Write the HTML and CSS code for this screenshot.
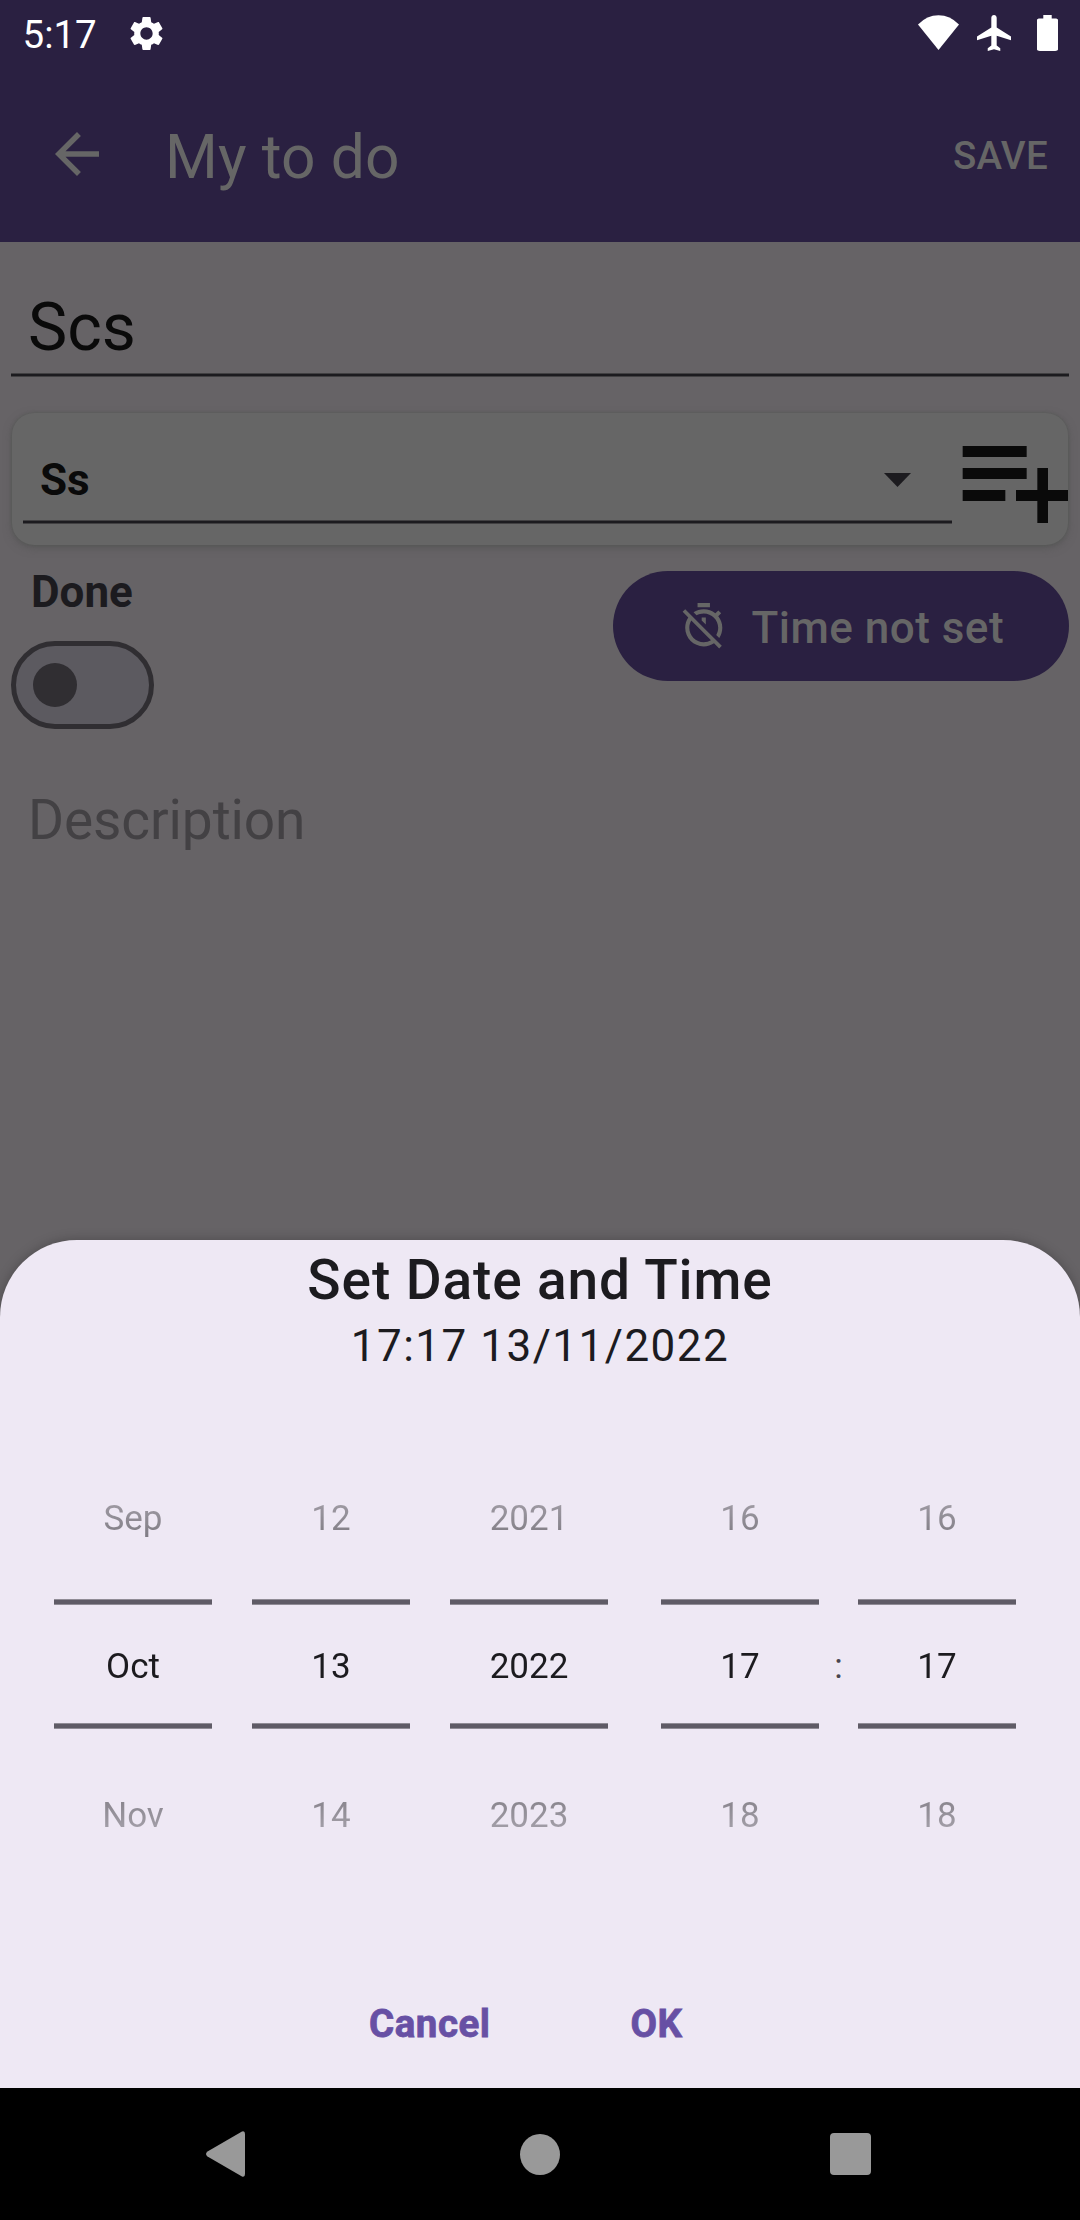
FILE: index.html
```html
<!DOCTYPE html>
<html lang="en">
<head>
<meta charset="utf-8">
<title>My to do</title>
<link rel="stylesheet" href="styles.css">
</head>
<body>
<div class="phone">
  <div class="status">
    <span class="clock">5:17</span>
    <svg class="gear" viewBox="0 0 24 24"><path fill="#fff" d="M19.14 12.94c.04-.3.06-.61.06-.94 0-.32-.02-.64-.07-.94l2.03-1.58c.18-.14.23-.41.12-.61l-1.92-3.32c-.12-.22-.37-.29-.59-.22l-2.39.96c-.5-.38-1.03-.7-1.62-.94l-.36-2.54c-.04-.24-.24-.41-.48-.41h-3.84c-.24 0-.43.17-.47.41l-.36 2.54c-.59.24-1.13.57-1.62.94l-2.39-.96c-.22-.08-.47 0-.59.22L2.74 8.87c-.12.21-.08.47.12.61l2.03 1.58c-.05.3-.09.63-.09.94s.02.64.07.94l-2.03 1.58c-.18.14-.23.41-.12.61l1.92 3.32c.12.22.37.29.59.22l2.39-.96c.5.38 1.03.7 1.62.94l.36 2.54c.05.24.24.41.48.41h3.84c.24 0 .44-.17.47-.41l.36-2.54c.59-.24 1.13-.56 1.62-.94l2.39.96c.22.08.47 0 .59-.22l1.92-3.32c.12-.22.07-.47-.12-.61l-2.01-1.58zM12 15.6c-1.98 0-3.6-1.62-3.6-3.6s1.62-3.6 3.6-3.6 3.6 1.62 3.6 3.6-1.62 3.6-3.6 3.6z"/></svg>
    <div class="indicators">
      <svg width="41" height="36" viewBox="0 0 41 36"><path fill="#fff" d="M20.500 35L0 9.500Q9 .3 20.500.3T41 9.500z"/></svg>
      <svg width="34" height="36" viewBox="2 2 19 20" preserveAspectRatio="none"><path fill="#fff" d="M21 16v-2l-8-5V3.500c0-.83-.67-1.500-1.500-1.500S10 2.670 10 3.500V9l-8 5v2l8-2.500V19l-2 1.500V22l3.500-1 3.500 1v-1.500L13 19v-5.500l8 2.500z"/></svg>
      <svg width="21" height="36" viewBox="7 2 10 20" preserveAspectRatio="none"><path fill="#fff" d="M15.670 4H14V2h-4v2H8.330C7.600 4 7 4.300 7 4.800v16.400c0 .5.600.8 1.330.8h7.330c.74 0 1.340-.3 1.340-.8V4.800c0-.5-.6-.8-1.330-.8z"/></svg>
    </div>
  </div>

  <header class="toolbar">
    <svg class="back" viewBox="0 0 24 24"><path fill="#666" d="M20 11H7.830l5.590-5.590L12 4l-8 8 8 8 1.410-1.410L7.830 13H20v-2z"/></svg>
    <h1 class="title">My to do</h1>
    <span class="save">SAVE</span>
  </header>

  <main class="form">
    <div class="name-field">Scs</div>
    <div class="card">
      <div class="select"><span>Ss</span>
        <svg class="caret" viewBox="0 0 27 14"><path fill="#1c1b1f" d="M0 0h27L13.500 14z"/></svg>
      </div>
      <svg class="add" viewBox="0 0 24 24" preserveAspectRatio="none"><path fill="#0a0a0a" d="M14 10H2v2h12zM14 6H2v2h12zM18 14v-4h-2v4h-4v2h4v4h2v-4h4v-2zM2 16h8v-2H2z"/></svg>
    </div>
    <div class="row">
      <div class="done">
        <span class="done-label">Done</span>
        <div class="switch"><div class="thumb"></div></div>
      </div>
      <div class="time-button">
        <svg class="timer" viewBox="0 0 24 24"><path fill="#666" d="M19.040 4.550l-1.420 1.420C16.070 4.740 14.120 4 12 4c-1.830 0-3.530.55-4.950 1.480l1.460 1.460C9.530 6.350 10.730 6 12 6c3.870 0 7 3.130 7 7 0 1.270-.35 2.470-.94 3.490l1.450 1.450C20.450 16.530 21 14.830 21 13c0-2.120-.74-4.070-1.970-5.610l1.420-1.420-1.410-1.420zM15 1H9v2h6V1zm-4 8.440l2 2V8h-2v1.440zM3.020 4L1.750 5.270 4.500 8.030C3.550 9.450 3 11.160 3 13c0 4.970 4.020 9 9 9 1.840 0 3.550-.55 4.980-1.500l2.500 2.500 1.270-1.270-7.710-7.710L3.020 4zM12 20c-3.870 0-7-3.130-7-7 0-1.280.35-2.480.95-3.520l9.560 9.560c-1.030.61-2.230.96-3.510.96z"/></svg>
        <span>Time not set</span>
      </div>
    </div>
    <div class="description">Description</div>
  </main>

  <section class="sheet">
    <h2 class="sheet-title">Set Date and Time</h2>
    <div class="sheet-value">17:17 13/11/2022</div>
    <div class="pickers">
      <div class="picker"><div class="wheel"><span>Sep</span><span>Oct</span><span>Nov</span></div></div>
      <div class="picker"><div class="wheel"><span>12</span><span>13</span><span>14</span></div></div>
      <div class="picker"><div class="wheel"><span>2021</span><span>2022</span><span>2023</span></div></div>
      <div class="picker hour"><div class="wheel"><span>16</span><span>17</span><span>18</span></div></div>
      <div class="colon">:</div>
      <div class="picker"><div class="wheel"><span>16</span><span>17</span><span>18</span></div></div>
    </div>
    <div class="actions"><span>Cancel</span><span>OK</span></div>
  </section>

  <nav class="nav">
    <svg width="39" height="46" viewBox="0 0 39 46"><path fill="#999" d="M36 .5Q39-.5 39 3v40q0 3.500-3 2.500L1.500 25.500q-3-2.500 0-5z"/></svg>
    <svg class="home" width="40" height="41" viewBox="0 0 40 41"><ellipse cx="20" cy="20.500" rx="20" ry="20.500" fill="#999"/></svg>
    <svg width="41" height="42" viewBox="0 0 41 42"><rect width="41" height="42" rx="4" fill="#999"/></svg>
  </nav>
</div>
</body>
</html>
```
FILE: styles.css
```css
* { box-sizing: border-box; }
body { margin: 0; font-family: Roboto, sans-serif; }
svg { display: block; flex: none; }
h1, h2 { margin: 0; }

.phone {
  width: 1080px;
  height: 2220px;
  display: flex;
  flex-direction: column;
  background: #666366;
  overflow: hidden;
}

.status {
  height: 66px;
  flex: none;
  display: flex;
  padding: 0 22px 0 22.500px;
  background: #2a2041;
  color: #fff;
}
.clock { width: 103.500px; font-size: 38.500px; line-height: 69px; }
.gear { width: 41px; height: 41px; margin-top: 13px; }
.indicators { display: flex; gap: 0 18px; margin: 15px 0 0 auto; }
.indicators svg:last-child { margin-left: 8px; }

.toolbar {
  height: 176px;
  flex: none;
  display: flex;
  align-items: center;
  padding: 0 32px 0 44px;
  background: #2a2041;
  color: #666;
}
.back { width: 66px; height: 66px; }
.title { flex: 1; padding: 8px 0 0 55px; font-size: 60.500px; font-weight: 400; line-height: 70px; letter-spacing: .1px; }
.save { padding-top: 4px; font-size: 38.500px; font-weight: 500; line-height: 44px; letter-spacing: .3px; }

.form { flex: 1; padding: 0 11px; }
.name-field {
  height: 135px;
  padding: 46px 17px 0;
  font-size: 66px;
  line-height: 80px;
  color: #0a0a0a;
}
.name-field, .select {
  background: linear-gradient(#414042 1px, #1c1b1f 1px 3px, #414042 3px) bottom / 100% 4px no-repeat;
}
.card {
  height: 132px;
  margin: 36px 1px 0;
  padding-left: 11px;
  display: flex;
  border-radius: 22px;
  overflow: hidden;
  background-color: #666;
  box-shadow: 0 0 3px rgba(80, 86, 80, .7), 0 3px 8px rgba(80, 80, 80, .6);
}
.select {
  width: 929px;
  height: 111px;
  flex: none;
  display: flex;
  justify-content: space-between;
  padding: 45px 41px 0 17px;
  font-size: 44px;
  font-weight: 700;
  line-height: 44px;
  color: #0a0a0a;
}
.caret { width: 27px; height: 14px; margin-top: 15px; }
.add { width: 128px; height: 132px; }

.row { display: flex; justify-content: space-between; margin-top: 26px; }
.done-label {
  display: block;
  height: 70px;
  padding-left: 20px;
  font-size: 44px;
  font-weight: 700;
  line-height: 42px;
  color: #1c1b1f;
}
.switch {
  width: 143px;
  height: 88px;
  padding: 16.500px;
  border: 5.500px solid #302e32;
  border-radius: 44px;
  background: #5c5a60;
}
.thumb { width: 44px; height: 44px; border-radius: 50%; background: #302e32; }
.time-button {
  width: 456px;
  height: 110px;
  display: flex;
  align-items: center;
  padding-left: 66px;
  gap: 23px;
  border-radius: 55px;
  background: #2a2041;
  color: #666;
  font-size: 44px;
  font-weight: 500;
  line-height: 50px;
  letter-spacing: .480px;
}
.time-button span { padding-top: 4px; }
.timer { width: 49.500px; height: 49.500px; }
.description { margin: 61px 0 0 17px; font-size: 55px; line-height: 60px; letter-spacing: -.1px; color: #434144; }

.sheet {
  height: 848px;
  flex: none;
  display: flex;
  flex-direction: column;
  border-radius: 77px 77px 0 0;
  background: #eee8f4;
  box-shadow: 0 0 12px rgba(0, 0, 0, .25);
  color: #1c1b1f;
  text-align: center;
}
.sheet-title { height: 80px; font-size: 55px; font-weight: 500; line-height: 80px; letter-spacing: .880px; }
.sheet-value { height: 96px; font-size: 44px; line-height: 52px; letter-spacing: 1.500px; }
.pickers { display: flex; gap: 40px; padding-left: 54px; font-size: 35px; }
.picker {
  width: 158px;
  height: 495px;
  background:
    linear-gradient(#908c96 1px, #5f5b66 1px 5px, #908c96 5px) 0 183px / 100% 6px no-repeat,
    linear-gradient(#908c96 1px, #5f5b66 1px 5px, #908c96 5px) 0 307px / 100% 6px no-repeat;
}
.wheel {
  height: 495px;
  display: flex;
  flex-direction: column;
  padding-top: 28.500px;
  line-height: 148.500px;
  -webkit-mask-image: linear-gradient(transparent, #000 230px 265px, transparent);
  mask-image: linear-gradient(transparent, #000 230px 265px, transparent);
}
.hour { margin-left: 13px; }
.colon { width: 39px; margin: 0 -40px; line-height: 501px; color: #49454f; }
.actions {
  display: flex;
  gap: 140px;
  padding: 82px 0 0 369px;
  font-size: 38.500px;
  font-weight: 700;
  line-height: 50px;
  letter-spacing: .500px;
  color: #6750a4;
  -webkit-text-stroke: .8px #6750a4;
}

.nav {
  height: 132px;
  flex: none;
  display: flex;
  align-items: center;
  justify-content: space-between;
  padding: 0 209px 0 206px;
  background: #000;
}
.home { margin-left: 5px; }
```
